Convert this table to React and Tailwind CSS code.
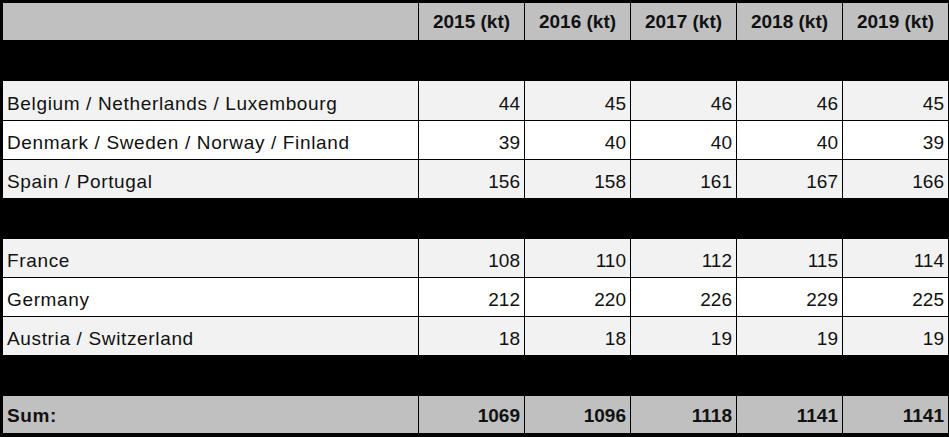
import React from "react";

const years = ["2015 (kt)", "2016 (kt)", "2017 (kt)", "2018 (kt)", "2019 (kt)"];

const groups = [
  [
    ["Belgium / Netherlands / Luxembourg", [44, 45, 46, 46, 45], "h-[39px]"],
    ["Denmark / Sweden / Norway / Finland", [39, 40, 40, 40, 39], "h-[38px]"],
    ["Spain / Portugal", [156, 158, 161, 167, 166], "h-[38px]"],
  ],
  [
    ["France", [108, 110, 112, 115, 114], "h-[38px]"],
    ["Germany", [212, 220, 226, 229, 225], "h-[38px]"],
    ["Austria / Switzerland", [18, 18, 19, 19, 19], "h-[38px]"],
  ],
];

const totals = [1069, 1096, 1118, 1141, 1141];

const Row = ({ label, values, h, shaded }) => {
  const bg = shaded ? "bg-[#f2f2f2]" : "bg-white";
  return (
    <div className={`grid grid-cols-[415px_105px_105px_105px_105px_105px] gap-x-px ${h}`}>
      <div className={`${bg} flex items-end pl-[4px] pb-[7px] leading-none tracking-[0.65px]`}>{label}</div>
      {values.map((v, i) => (
        <div key={i} className={`${bg} flex items-end justify-end pr-[4px] pb-[7px] leading-none`}>
          {v}
        </div>
      ))}
    </div>
  );
};

export default function App() {
  return (
    <div
      className="w-[949px] h-[437px] bg-black pt-[3px] pl-[3px] pr-[1px] pb-[4px] flex flex-col gap-y-px text-[19px] text-[#111]"
      style={{ fontFamily: '"Liberation Sans", Arial, sans-serif' }}
    >
      <div className="grid grid-cols-[415px_105px_105px_105px_105px_105px] gap-x-px h-[37px]">
        <div className="bg-[#c0c0c0]" />
        {years.map((y) => (
          <div key={y} className="bg-[#c0c0c0] flex items-center justify-center font-bold leading-none">
            {y}
          </div>
        ))}
      </div>

      {groups.map((rows, g) => (
        <React.Fragment key={g}>
          <div className="h-[39px] bg-black" />
          {rows.map(([label, values, h], i) => (
            <Row key={label} label={label} values={values} h={h} shaded={i !== 1} />
          ))}
        </React.Fragment>
      ))}

      <div className="h-[39px] bg-black" />

      <div className="grid grid-cols-[415px_105px_105px_105px_105px_105px] gap-x-px h-[37px] font-bold">
        <div className="bg-[#c0c0c0] flex items-end pl-[4px] pb-[8px] leading-none tracking-[0.65px]">Sum:</div>
        {totals.map((t, i) => (
          <div key={i} className="bg-[#c0c0c0] flex items-end justify-end pr-[4px] pb-[8px] leading-none">
            {t}
          </div>
        ))}
      </div>
    </div>
  );
}
